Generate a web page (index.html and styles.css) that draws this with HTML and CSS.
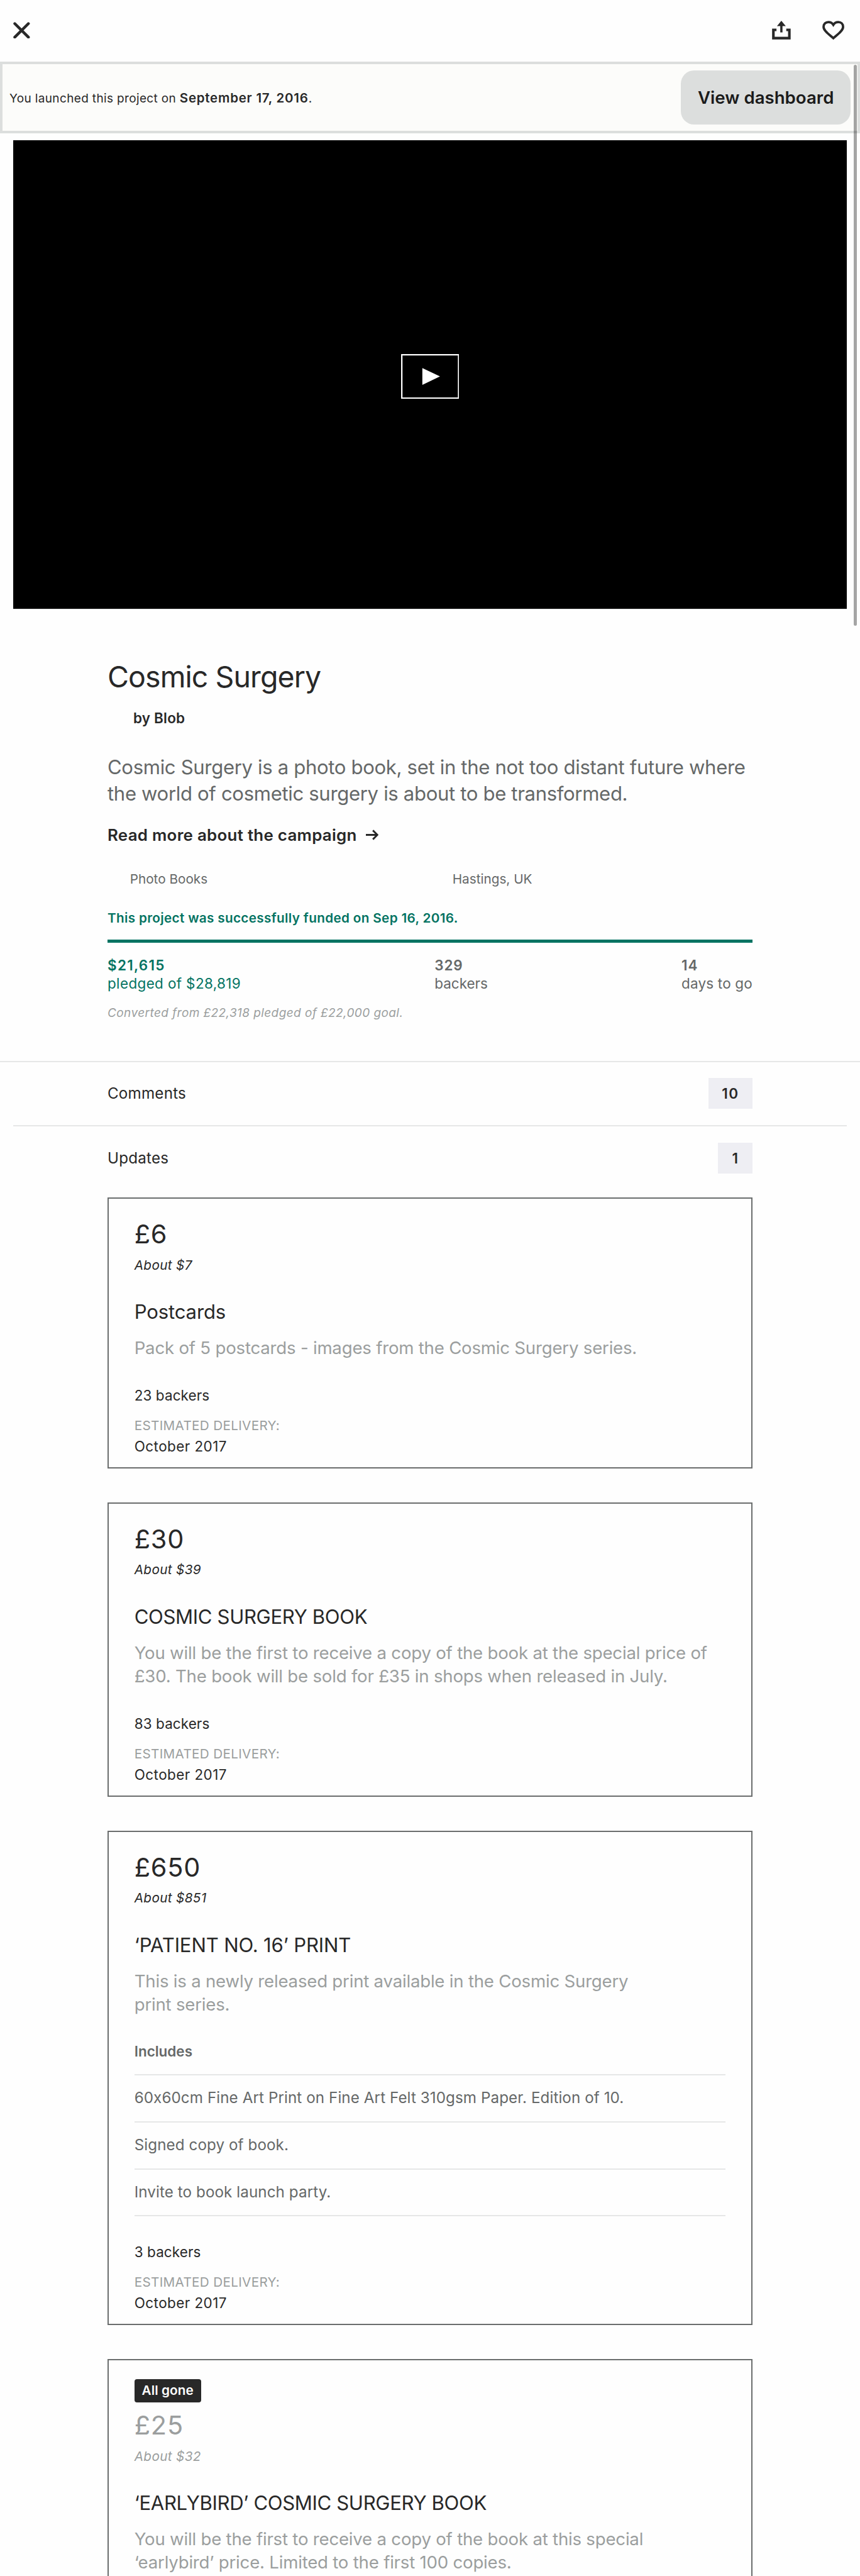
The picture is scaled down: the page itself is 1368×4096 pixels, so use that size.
FILE: index.html
```html
<!DOCTYPE html>
<html lang="en">
<head>
<meta charset="utf-8">
<title>Cosmic Surgery</title>
<link rel="stylesheet" href="styles.css">
</head>
<body>
<div class="page">
  <header class="topbar">
    <svg class="icon-close" viewBox="0 0 30 30" fill="none" stroke="currentColor" stroke-width="5" stroke-linecap="round"><path d="M2.8 2.8 27.2 27.2M27.2 2.8 2.8 27.2"/></svg>
    <div class="actions">
      <svg class="icon-share" viewBox="0 0 34 34" fill="none" stroke="currentColor" stroke-width="4.6"><path d="M8 16.2H2.5V31H31V16.2H25.5"/><path d="M16.75 8V20.8" stroke-width="4"/><path d="M16.75 0 24.6 9.4H8.9Z" fill="currentColor" stroke="none"/></svg>
      <svg class="icon-heart" viewBox="0 0 40 34" fill="none" stroke="currentColor" stroke-width="4.2"><path d="M19.75 31.2C15 26.5 2.3 18.5 2.3 10.8 2.3 5.6 6 2.3 10.8 2.3 14.7 2.3 17.8 3.900 19.75 7.200 21.7 3.900 24.8 2.3 28.700 2.3 33.500 2.3 37.200 5.600 37.200 10.800 37.200 18.500 24.500 26.500 19.750 31.200Z"/></svg>
    </div>
  </header>

  <section class="launch">
    <p class="launch-text"><span>You launched this project on</span> <b>September 17, 2016</b>.</p>
    <button class="dashboard" type="button">View dashboard</button>
  </section>

  <div class="video">
    <svg class="play" viewBox="0 0 104 80"><rect x="1.25" y="1.25" width="101.5" height="77.5" fill="none" stroke="#fff" stroke-width="2.5"/><path d="M38 25 69.500 40 38 55Z" fill="#fff"/></svg>
  </div>

  <section class="project">
    <h1>Cosmic Surgery</h1>
    <p class="creator">by Blob</p>
    <p class="blurb">Cosmic Surgery is a photo book, set in the not too distant future where<br>the world of cosmetic surgery is about to be transformed.</p>
    <a class="more">Read more about the campaign
      <svg class="icon-arrow" viewBox="0 0 23 19" fill="none" stroke="currentColor" stroke-width="3.200"><path d="M0 9.500H20.500M12.500 1.500 20.500 9.500 12.500 17.500"/></svg>
    </a>
    <div class="meta"><span>Photo Books</span><span>Hastings, UK</span></div>
    <p class="funded">This project was successfully funded on Sep 16, 2016.</p>
    <div class="progress"></div>
    <dl class="stats">
      <div class="raised"><dt>$21,615</dt><dd>pledged of $28,819</dd></div>
      <div><dt>329</dt><dd class="backer-label">backers</dd></div>
      <div><dt>14</dt><dd>days to go</dd></div>
    </dl>
    <p class="converted">Converted from £22,318 pledged of £22,000 goal.</p>
  </section>

  <nav class="links">
    <a class="row row-comments"><span>Comments</span><span class="count count-wide">10</span></a>
    <div class="divider"></div>
    <a class="row row-updates"><span>Updates</span><span class="count">1</span></a>
  </nav>

  <main class="rewards">
    <article class="card">
      <p class="price">£6</p>
      <p class="about">About $7</p>
      <h2>Postcards</h2>
      <p class="desc">Pack of 5 postcards - images from the Cosmic Surgery series.</p>
      <p class="backers">23 backers</p>
      <p class="est">ESTIMATED DELIVERY:</p>
      <p class="date">October 2017</p>
    </article>

    <article class="card">
      <p class="price">£30</p>
      <p class="about">About $39</p>
      <h2 class="tight">COSMIC SURGERY BOOK</h2>
      <p class="desc">You will be the first to receive a copy of the book at the special price of<br>£30. The book will be sold for £35 in shops when released in July.</p>
      <p class="backers">83 backers</p>
      <p class="est">ESTIMATED DELIVERY:</p>
      <p class="date">October 2017</p>
    </article>

    <article class="card">
      <p class="price">£650</p>
      <p class="about">About $851</p>
      <h2>‘PATIENT NO. 16’ PRINT</h2>
      <p class="desc">This is a newly released print available in the Cosmic Surgery<br>print series.</p>
      <h3>Includes</h3>
      <ul class="includes">
        <li>60x60cm Fine Art Print on Fine Art Felt 310gsm Paper. Edition of 10.</li>
        <li>Signed copy of book.</li>
        <li>Invite to book launch party.</li>
      </ul>
      <p class="backers">3 backers</p>
      <p class="est">ESTIMATED DELIVERY:</p>
      <p class="date">October 2017</p>
    </article>

    <article class="card card-gone">
      <span class="gone">All gone</span>
      <p class="price">£25</p>
      <p class="about">About $32</p>
      <h2 class="tight">‘EARLYBIRD’ COSMIC SURGERY BOOK</h2>
      <p class="desc">You will be the first to receive a copy of the book at this special<br>‘earlybird’ price. Limited to the first 100 copies.</p>
    </article>
  </main>

  <div class="scroll-thumb"></div>
</div>
</body>
</html>
```

FILE: styles.css
```css
* { box-sizing: border-box; }

body, h1, h2, h3, p, dl, dt, dd, ul { margin: 0; padding: 0; }

body {
  background: #fefefe;
  color: #282828;
  font-family: Inter, "Liberation Sans", sans-serif;
  font-weight: 400;
}

.page {
  position: relative;
  width: 1368px;
  height: 4096px;
  overflow: hidden;
}

/* Top bar */
.topbar {
  display: flex;
  align-items: center;
  justify-content: space-between;
  height: 98px;
  padding: 0 24.5px 2px 21px;
}
.actions { display: flex; align-items: center; gap: 49.800px; }
.icon-close { width: 26.700px; height: 26.700px; }
.icon-share { width: 30.300px; height: 30.300px; }
.icon-heart { width: 35.600px; height: 30.300px; }

/* Launch banner */
.launch {
  display: flex;
  align-items: center;
  justify-content: space-between;
  height: 114px;
  padding: 0 10.600px 0 11px;
  border: 4px solid #dcdedd;
  background: #fcfcfa;
}
.launch-text {
  padding-top: 1px;
  font-size: 19px;
  letter-spacing: 0.35px;
  white-space: nowrap;
}
.launch-text b { font-size: 20.500px; font-weight: 600; letter-spacing: 0.75px; }
.dashboard {
  width: 270.400px;
  height: 85.500px;
  padding: 0;
  border: 0;
  border-radius: 21px;
  background: #dcdedd;
  color: #1b1b1b;
  font: 600 27.640px Inter, "Liberation Sans", sans-serif;
}

/* Video */
.video {
  display: flex;
  align-items: center;
  justify-content: center;
  height: 746.400px;
  margin: 10.600px 21.400px 0;
  padding-top: 6px;
  border-bottom: 1px solid #e2e3e3;
  background: #000;
}
.play { width: 92.600px; height: 71.200px; }

/* Project summary */
.project { width: 1026px; margin: 0 auto; padding-top: 78.600px; }
h1 { font-size: 46.500px; font-weight: 400; line-height: 56px; letter-spacing: -0.92px; }
.creator {
  margin-top: 24.600px;
  padding-left: 41px;
  font-size: 22.460px;
  font-weight: 600;
  line-height: 28px;
  letter-spacing: 0.2px;
}
.blurb {
  margin-top: 44.100px;
  color: #656868;
  font-size: 31.100px;
  line-height: 41.400px;
  letter-spacing: -0.34px;
  white-space: nowrap;
}
.more {
  display: flex;
  align-items: center;
  gap: 14px;
  margin-top: 28.900px;
  font-size: 25.920px;
  font-weight: 600;
  line-height: 32px;
  letter-spacing: 0.26px;
}
.icon-arrow { width: 20.500px; height: 17px; }
.meta {
  display: grid;
  grid-template-columns: 1fr 1fr;
  margin-top: 41.400px;
  color: #656868;
  font-size: 20.730px;
  line-height: 26px;
}
.meta span { padding-left: 35.700px; }
.funded {
  margin-top: 35.500px;
  color: #037362;
  font-size: 20.730px;
  font-weight: 600;
  line-height: 26px;
  letter-spacing: 0.32px;
}
.progress { height: 5px; margin-top: 21.100px; background: #037362; }
.stats {
  display: flex;
  justify-content: space-between;
  margin-top: 22px;
  color: #656868;
  font-size: 22.460px;
  line-height: 28.800px;
}
.stats dt { font-weight: 600; letter-spacing: 0.9px; }
.stats dd { letter-spacing: 0.2px; }
.stats .backer-label { letter-spacing: 0; }
.stats .raised { color: #037362; }
.raised dt { letter-spacing: 1.280px; }
.raised dd { letter-spacing: 0.370px; }
.converted {
  margin-top: 20.300px;
  color: #9b9e9e;
  font-size: 19px;
  font-style: italic;
  line-height: 24px;
  letter-spacing: 0.420px;
}

/* Comments and updates */
.links { margin-top: 64px; border-top: 2px solid #e6e7e7; }
.row {
  display: flex;
  align-items: center;
  justify-content: space-between;
  width: 1026px;
  margin: 0 auto;
  font-size: 24.190px;
  letter-spacing: 0.2px;
}
.row-comments { height: 99.700px; }
.row-updates { height: 102px; }
.divider { height: 2px; margin: 0 21.400px; background: #e6e7e7; }
.count {
  width: 55.500px;
  background: #eeeef3;
  font-size: 22.460px;
  font-weight: 600;
  line-height: 49.400px;
  text-align: center;
}
.count-wide { width: 70.300px; letter-spacing: 1.500px; }

/* Reward cards */
.rewards { width: 1026px; margin: 11.800px auto 0; }
.card {
  margin-bottom: 53.800px;
  padding: 30.900px 40.700px 19.600px;
  border: 2px solid #6a6d6d;
}
.price { font-size: 41.470px; line-height: 50px; letter-spacing: 0.8px; }
.about {
  margin-top: 11.400px;
  font-size: 20.730px;
  font-style: italic;
  line-height: 26px;
  letter-spacing: 0.350px;
}
h2 {
  margin-top: 41.400px;
  font-size: 31.100px;
  font-weight: 400;
  line-height: 40px;
  letter-spacing: -0.150px;
}
.tight { letter-spacing: -0.350px; }
.desc {
  margin-top: 18.900px;
  color: #9b9e9e;
  font-size: 27.640px;
  line-height: 37.400px;
  letter-spacing: -0.220px;
  white-space: nowrap;
}
h3 {
  margin-top: 41.700px;
  color: #656868;
  font-size: 22.460px;
  font-weight: 600;
  line-height: 28px;
}
.includes {
  margin-top: 22px;
  border-top: 2px solid #e6e7e7;
  color: #656868;
  font-size: 24.190px;
  letter-spacing: 0.085px;
  list-style: none;
}
.includes li { height: 74.800px; border-bottom: 2px solid #e6e7e7; line-height: 72.800px; }
.backers { margin-top: 42.300px; font-size: 22.460px; line-height: 28px; letter-spacing: 0.1px; }
.est {
  margin-top: 21.700px;
  color: #9b9e9e;
  font-size: 20.730px;
  line-height: 26px;
  letter-spacing: 0.3px;
}
.date { margin-top: 5.300px; font-size: 22.460px; line-height: 28px; letter-spacing: 0.450px; }

.card-gone { padding-top: 30px; padding-bottom: 60px; }
.card-gone .price, .card-gone .about { color: #9b9e9e; }
.card-gone .price { margin-top: 11.600px; }
.gone {
  display: block;
  width: 106px;
  border-radius: 4px;
  background: #282828;
  color: #fff;
  font-size: 20.730px;
  font-weight: 600;
  line-height: 36.500px;
  letter-spacing: 0.080px;
  text-align: center;
}

/* Scroll indicator floats over the banner and video */
.scroll-thumb {
  position: absolute;
  top: 103.300px;
  left: 1358px;
  width: 4.500px;
  height: 892px;
  border-radius: 3px;
  background: rgba(0, 0, 0, 0.350);
}
```
